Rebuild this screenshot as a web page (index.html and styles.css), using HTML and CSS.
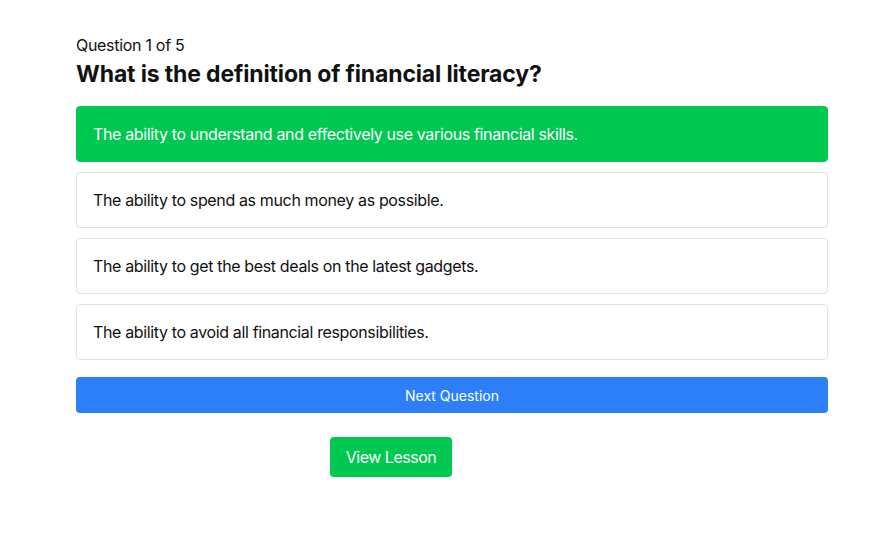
FILE: index.html
```html
<!DOCTYPE html>
<html>
<head>
<meta charset="utf-8">
<link rel="stylesheet" href="styles.css">
</head>
<body>
<div class="quiz">
  <div class="counter">Question 1 of 5</div>
  <h2 class="question">What is the definition of financial literacy?</h2>
  <div class="options">
    <div class="option selected">The ability to understand and effectively use various financial skills.</div>
    <div class="option">The ability to spend as much money as possible.</div>
    <div class="option">The ability to get the best deals on the latest gadgets.</div>
    <div class="option">The ability to avoid all financial responsibilities.</div>
  </div>
  <button class="next">Next Question</button>
  <div class="lesson-row">
    <button class="lesson">View Lesson</button>
  </div>
</div>
</body>
</html>
```
FILE: styles.css
```css
* { box-sizing: border-box; }
body {
  margin: 0;
  background: #fff;
  font-family: Inter, "Liberation Sans", sans-serif;
  color: #111;
}
.quiz {
  width: 752px;
  margin: 0 0 0 76px;
  padding-top: 35px;
}
.counter {
  font-size: 16px;
  line-height: 20px;
  letter-spacing: -0.3px;
}
.question {
  margin: 5px 0 18px;
  font-size: 23px;
  line-height: 28px;
  font-weight: 700;
  letter-spacing: -0.15px;
}
.options {
  display: flex;
  flex-direction: column;
  gap: 10px;
}
.option {
  border: 1px solid #e2e2e2;
  border-radius: 4px;
  padding: 15px 16px;
  font-size: 16px;
  line-height: 24px;
  letter-spacing: -0.36px;
  color: #111;
  background: #fff;
}
.option.selected {
  background: #00c851;
  border-color: #00c851;
  color: #fff;
}
.next {
  display: block;
  width: 100%;
  margin-top: 17px;
  height: 36px;
  border: none;
  border-radius: 4px;
  background: #2d7ff9;
  color: #fff;
  font-family: inherit;
  font-size: 14px;
}
.lesson-row {
  margin-top: 24px;
  padding-left: 254px;
}
.lesson {
  height: 40px;
  width: 122px;
  border: none;
  border-radius: 4px;
  background: #00c851;
  color: #fff;
  font-family: inherit;
  font-size: 16px;
  letter-spacing: -0.5px;
}
```
